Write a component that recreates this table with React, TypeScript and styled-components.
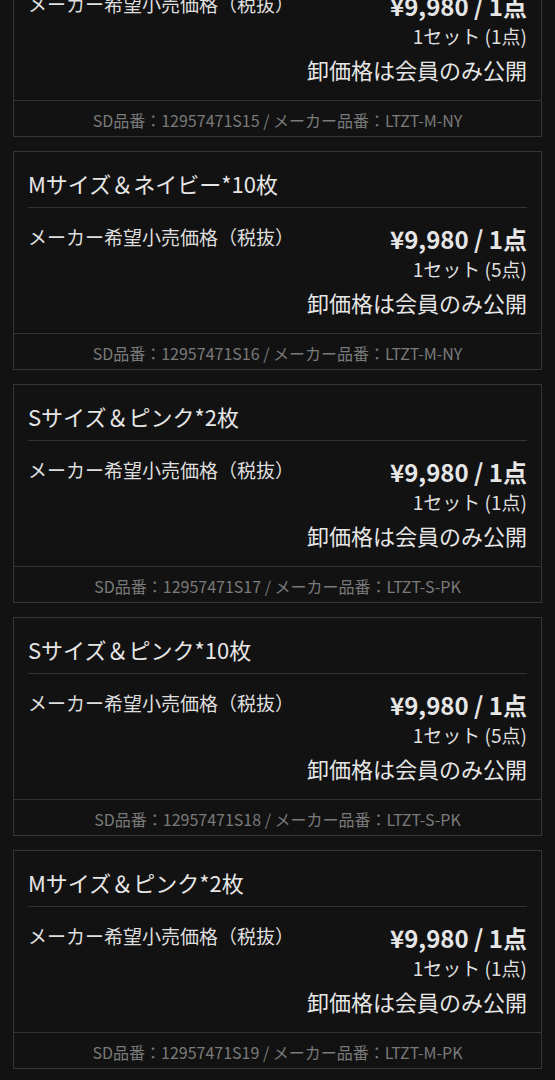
import React from "react";
import styled, { createGlobalStyle } from "styled-components";

const GlobalStyle = createGlobalStyle`
  html, body {
    margin: 0;
    padding: 0;
    background: #121212;
  }
  body {
    font-family: "Noto Sans CJK JP", "Noto Sans", sans-serif;
    color: #e2e2e2;
    overflow: hidden;
  }
`;

const Viewport = styled.div`
  height: 1080px;
  overflow: hidden;
`;

const List = styled.div`
  display: flex;
  flex-direction: column;
  gap: 14px;
  padding: 0 13px;
  margin-top: -82px;
`;

const Card = styled.section`
  border: 1px solid #353535;
  background: #121212;
  display: flex;
  flex-direction: column;
`;

const Title = styled.h3`
  margin: 0 14px;
  padding: 16px 0 9px;
  font-size: 22px;
  line-height: 30px;
  font-weight: 400;
  color: #e6e6e6;
  border-bottom: 1px solid #333;
`;

const Body = styled.div`
  display: flex;
  justify-content: space-between;
  align-items: flex-start;
  padding: 17px 14px 15px;
`;

const Label = styled.div`
  font-size: 19px;
  line-height: 24px;
  color: #dedede;
`;

const PriceCol = styled.div`
  display: flex;
  flex-direction: column;
  align-items: flex-end;
  text-align: right;
`;

const Price = styled.div`
  font-size: 24px;
  line-height: 28px;
  font-weight: 700;
  color: #e6e6e6;
`;

const SetCount = styled.div`
  margin-top: 3px;
  font-size: 19px;
  line-height: 26px;
  color: #dedede;
`;

const Notice = styled.div`
  margin-top: 4px;
  font-size: 22px;
  line-height: 32px;
  color: #e6e6e6;
`;

const Footer = styled.div`
  border-top: 1px solid #333;
  padding: 8px 14px 5px;
  text-align: center;
  font-size: 16px;
  line-height: 22px;
  color: #7a7a7a;
`;

type Item = {
  title: string;
  count: number;
  sd: string;
  maker: string;
};

const items: Item[] = [
  { title: "Mサイズ＆ネイビー*2枚", count: 1, sd: "12957471S15", maker: "LTZT-M-NY" },
  { title: "Mサイズ＆ネイビー*10枚", count: 5, sd: "12957471S16", maker: "LTZT-M-NY" },
  { title: "Sサイズ＆ピンク*2枚", count: 1, sd: "12957471S17", maker: "LTZT-S-PK" },
  { title: "Sサイズ＆ピンク*10枚", count: 5, sd: "12957471S18", maker: "LTZT-S-PK" },
  { title: "Mサイズ＆ピンク*2枚", count: 1, sd: "12957471S19", maker: "LTZT-M-PK" },
];

export default function App() {
  return (
    <>
      <GlobalStyle />
      <Viewport>
        <List>
          {items.map((it) => (
            <Card key={it.sd}>
              <Title>{it.title}</Title>
              <Body>
                <Label>メーカー希望小売価格（税抜）</Label>
                <PriceCol>
                  <Price>¥9,980 / 1点</Price>
                  <SetCount>1セット ({it.count}点)</SetCount>
                  <Notice>卸価格は会員のみ公開</Notice>
                </PriceCol>
              </Body>
              <Footer>
                SD品番：{it.sd} / メーカー品番：{it.maker}
              </Footer>
            </Card>
          ))}
        </List>
      </Viewport>
    </>
  );
}
